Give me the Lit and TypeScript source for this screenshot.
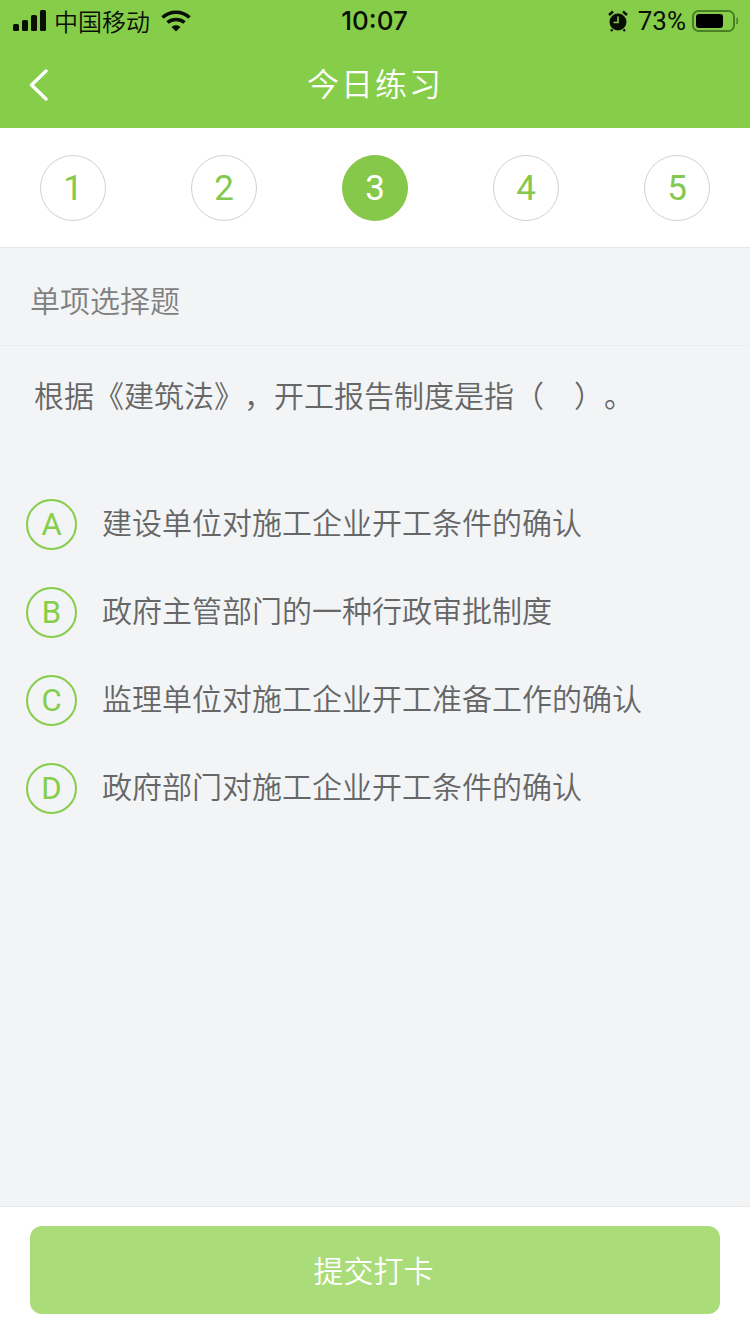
import { LitElement, html, css } from "lit";
import { customElement } from "lit/decorators.js";

@customElement("app-root")
export class AppRoot extends LitElement {
  static styles = css`
    :host {
      display: flex;
      flex-direction: column;
      width: 750px;
      height: 1334px;
      background: #f2f4f6;
      font-family: "Noto Sans CJK SC", "Liberation Sans", sans-serif;
      text-spacing-trim: space-all;
      overflow: hidden;
    }
    .header { background: #86cd4a; height: 128px; display: flex; flex-direction: column; flex: none; }
    .status {
      height: 40px; display: grid; grid-template-columns: 1fr auto 1fr; align-items: center;
      padding: 0 12px 0 13px; color: #0a0f05;
    }
    .status-l, .status-r { display: flex; align-items: center; }
    .status-r { justify-content: flex-end; }
    .carrier { font-size: 24px; margin-left: 7px; font-weight: 350; line-height: 40px; }
    .wifi { margin-left: 11px; }
    .time { font: 500 26px/42px Inter, "Liberation Sans", sans-serif; margin-right: 2px; }
    .pct { font: 400 26px/42px Roboto, "Liberation Sans", sans-serif; margin: 0 6px 0 10px; }
    .nav {
      height: 88px; display: grid; grid-template-columns: 1fr auto 1fr; align-items: center;
      padding: 0 28px;
    }
    .back { display: block; margin-top: 2px; }
    .title { color: #fff; font-size: 32px; letter-spacing: 2px; font-weight: 350; line-height: 84px; margin-bottom: 4px; }

    .steps {
      height: 119px; flex: none; background: #fff; border-bottom: 1px solid #e6e8ea;
      display: flex; justify-content: space-between; align-items: center;
      padding: 0 40px; box-sizing: content-box;
    }
    .step {
      width: 66px; height: 66px; box-sizing: border-box; border-radius: 50%; padding-top: 2px;
      border: 1px solid #cfd2d0; display: flex; align-items: center; justify-content: center;
      color: #84c84e; font: 400 35px/1 Roboto, "Liberation Sans", sans-serif;
    }
    .step.on { background: #86c84a; border-color: #86c84a; color: #fff; }

    .kind {
      height: 98px; flex: none; box-sizing: border-box; border-bottom: 1px solid #eaecee;
      padding: 5px 0 0 30px; display: flex; align-items: center;
      font-size: 30px; font-weight: 350; color: #808080;
    }
    .question {
      flex: none; padding: 28px 0 0 34px; height: 110px; box-sizing: border-box;
      font-size: 30px; font-weight: 350; color: #666; line-height: 40px; white-space: pre;
    }
    .options { flex: 1; display: flex; flex-direction: column; padding: 24px 0 0 26px; }
    .option { height: 88px; display: flex; align-items: center; }
    .letter {
      width: 51px; height: 51px; box-sizing: border-box; border-radius: 50%;
      border: 2px solid #86cd4a; color: #86cd4a; flex: none;
      display: flex; align-items: center; justify-content: center;
      font: 400 31px/1 Roboto, "Liberation Sans", sans-serif;
    }
    .text { margin: 0 0 7px 25px; font-size: 30px; font-weight: 350; color: #666; line-height: 40px; }

    .footer {
      flex: none; height: 128px; box-sizing: border-box; background: #fff;
      border-top: 1px solid #e6e8ea; padding: 19px 30px 0;
    }
    .submit {
      height: 88px; border-radius: 12px; background: #aadc79; color: #fff;
      display: flex; align-items: center; justify-content: center;
      font-size: 30px; font-weight: 350; padding: 0 3px 3px 0; box-sizing: border-box;
    }
  `;

  render() {
    const steps = [1, 2, 3, 4, 5];
    const options = [
      ["A", "建设单位对施工企业开工条件的确认"],
      ["B", "政府主管部门的一种行政审批制度"],
      ["C", "监理单位对施工企业开工准备工作的确认"],
      ["D", "政府部门对施工企业开工条件的确认"],
    ];
    return html`
      <div class="header">
        <div class="status">
          <div class="status-l">
            <svg width="34" height="22" viewBox="0 0 34 22" fill="#0a0f05">
              <rect x="0" y="14" width="6" height="7" rx="1.5" />
              <rect x="9" y="10" width="6" height="11" rx="1.5" />
              <rect x="18" y="5" width="6" height="16" rx="1.5" />
              <rect x="27" y="0" width="6" height="21" rx="1.5" />
            </svg>
            <span class="carrier">中国移动</span>
            <svg class="wifi" width="30" height="22" viewBox="0 0 30 22" fill="none" stroke="#0a0f05" stroke-width="3.6">
              <path d="M1.5 7.5 C9 0.5 21 0.5 28.5 7.5" />
              <path d="M6.5 12.5 C11 8.5 19 8.5 23.5 12.5" />
              <path d="M10.5 17 L15 21.5 L19.5 17 C17 14.8 13 14.8 10.5 17 Z" fill="#0a0f05" stroke="none" />
            </svg>
          </div>
          <div class="time">10:07</div>
          <div class="status-r">
            <svg width="20" height="22" viewBox="0 0 20 22">
              <circle cx="10" cy="12" r="8.5" fill="#0a0f05" />
              <path d="M10 6.5 V12.5 H5.5" fill="none" stroke="#86cd4a" stroke-width="1.6" />
              <path d="M1 5 L5 1.5 M19 5 L15 1.5 M4.5 19.5 L3 21 M15.5 19.5 L17 21" stroke="#0a0f05" stroke-width="2.4" />
            </svg>
            <span class="pct">73%</span>
            <svg width="46" height="24" viewBox="0 0 46 24">
              <rect x="1" y="2" width="41" height="20" rx="5.5" fill="none" stroke="#4a7f26" stroke-width="2" />
              <rect x="4" y="5" width="27" height="14" rx="3" fill="#000" />
              <path d="M44.5 9 C45.6 10 45.6 14 44.5 15" fill="none" stroke="#4a7f26" stroke-width="1.6" />
            </svg>
          </div>
        </div>
        <div class="nav">
          <svg class="back" width="22" height="32" viewBox="0 0 22 32" fill="none" stroke="#fff" stroke-width="3.4" stroke-linecap="round" stroke-linejoin="round">
            <path d="M18 2 L3.5 16 L18 30" />
          </svg>
          <span class="title">今日练习</span>
          <span></span>
        </div>
      </div>
      <div class="steps">
        ${steps.map((n) => html`<div class="step ${n === 3 ? "on" : ""}">${n}</div>`)}
      </div>
      <div class="kind">单项选择题</div>
      <div class="question">根据《建筑法》，开工报告制度是指（　）。</div>
      <div class="options">
        ${options.map(
          ([l, t]) => html`<div class="option"><div class="letter">${l}</div><div class="text">${t}</div></div>`
        )}
      </div>
      <div class="footer"><div class="submit">提交打卡</div></div>
    `;
  }
}
